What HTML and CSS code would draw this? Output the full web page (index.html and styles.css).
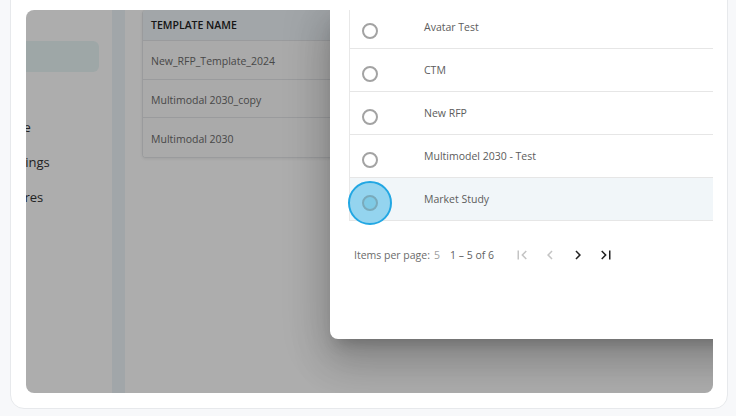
FILE: index.html
```html
<!DOCTYPE html>
<html lang="en">
  <head>
    <meta charset="UTF-8" />
    <meta name="viewport" content="width=device-width, initial-scale=1.0" />
    <title>Templates</title>
    <link rel="stylesheet" href="styles.css">
  </head>
  <body>
    <div class="card">
      <div class="frame">
        <aside class="sidebar">
          <nav class="nav">
            <a class="nav-item active">Home</a>
            <a class="nav-item">Users</a>
            <a class="nav-item">Template</a>
            <a class="nav-item">App Settings</a>
            <a class="nav-item">Procedures</a>
          </nav>
        </aside>
        <div class="strip"></div>
        <main class="main">
          <div class="tpl-table">
            <div class="tpl-head">TEMPLATE NAME</div>
            <div class="tpl-row">New_RFP_Template_2024</div>
            <div class="tpl-row">Multimodal 2030_copy</div>
            <div class="tpl-row">Multimodal 2030</div>
          </div>
        </main>

        <div class="backdrop"></div>

        <div class="dialog">
          <div class="pick-table">
            <div class="pick-row">
              <div class="radio-cell"><span class="radio"></span></div>
              <div class="name-cell">Avatar Test</div>
            </div>
            <div class="pick-row">
              <div class="radio-cell"><span class="radio"></span></div>
              <div class="name-cell">CTM</div>
            </div>
            <div class="pick-row">
              <div class="radio-cell"><span class="radio"></span></div>
              <div class="name-cell">New RFP</div>
            </div>
            <div class="pick-row">
              <div class="radio-cell"><span class="radio"></span></div>
              <div class="name-cell">Multimodel 2030 - Test</div>
            </div>
            <div class="pick-row selected">
              <div class="radio-cell"><span class="ripple"></span><span class="radio"></span></div>
              <div class="name-cell">Market Study</div>
            </div>
          </div>

          <div class="paginator">
            <span class="per-page">Items per page:</span>
            <span class="page-size">5</span>
            <span class="range">1 – 5 of 6</span>
            <div class="page-btns">
              <button class="page-btn off">
                <svg viewBox="0 0 24 24"><path d="M18.41 16.59L13.82 12l4.59-4.59L17 6l-6 6 6 6zM6 6h2v12H6z"/></svg>
              </button>
              <button class="page-btn off">
                <svg viewBox="0 0 24 24"><path d="M15.41 7.41L14 6l-6 6 6 6 1.41-1.41L10.83 12z"/></svg>
              </button>
              <button class="page-btn">
                <svg viewBox="0 0 24 24"><path d="M10 6L8.59 7.41 13.17 12l-4.58 4.59L10 18l6-6z"/></svg>
              </button>
              <button class="page-btn">
                <svg viewBox="0 0 24 24"><path d="M5.59 7.41L10.18 12l-4.59 4.59L7 18l6-6-6-6zM16 6h2v12h-2z"/></svg>
              </button>
            </div>
          </div>
        </div>
      </div>
    </div>
  </body>
</html>
```

FILE: styles.css
```css
* {
  margin: 0;
  padding: 0;
  box-sizing: border-box;
}

body {
  background: #f7f8fa;
  font-family: "Open Sans", "Liberation Sans", sans-serif;
  height: 100vh;
  overflow: hidden;
}

.card {
  margin: -20px 8px 0 10px;
  height: 429px;
  background: #fff;
  border: 1px solid #e7e9ec;
  border-radius: 14px;
  padding: 29px 14px 15px 15px;
}

.frame {
  position: relative;
  height: 383px;
  display: flex;
  overflow: hidden;
  border-radius: 8px 0 8px 8px;
  background: #fff;
}

/* sidebar, scrolled partly out of view */
.sidebar {
  width: 86px;
  overflow: hidden;
  background: #fff;
}

.nav {
  margin-left: -64px;
  padding-top: 31px;
  display: flex;
  flex-direction: column;
  gap: 4px;
  width: 170px;
}

.nav-item {
  height: 31px;
  display: flex;
  align-items: center;
  padding-left: 12px;
  font-size: 13px;
  color: #333;
  white-space: nowrap;
}

.nav-item.active {
  width: 137px;
  background: #e9f7f7;
  border-radius: 0 6px 6px 0;
}

.strip {
  width: 13px;
  background: #eef5fa;
}

.main {
  flex: 1;
  padding-left: 17px;
}

.tpl-table {
  width: 320px;
  border: 1px solid #e3e5e7;
  border-top: none;
  border-radius: 4px;
  overflow: hidden;
  box-shadow: 0 1px 3px rgba(0, 0, 0, 0.08);
}

.tpl-head {
  height: 31px;
  display: flex;
  align-items: center;
  padding-left: 8px;
  background: #eff5f9;
  border-bottom: 1px solid #e3e5e7;
  font-size: 10.5px;
  font-weight: 600;
  color: #222;
}

.tpl-row {
  height: 38.7px;
  display: flex;
  align-items: center;
  padding: 2px 0 0 8px;
  background: #fbfbfb;
  border-bottom: 1px solid #e3e5e7;
  font-size: 10.5px;
  color: #6a6a6a;
}

.tpl-row:last-child {
  border-bottom: none;
}

.backdrop {
  position: absolute;
  inset: 0;
  background: rgba(0, 0, 0, 0.32);
}

/* picker dialog */
.dialog {
  position: absolute;
  left: 304px;
  top: -4px;
  width: 440px;
  height: 333px;
  background: #fff;
  border-radius: 0 0 8px 8px;
  padding-left: 19px;
  box-shadow: 0 11px 15px -7px rgba(0, 0, 0, 0.2),
              0 24px 38px 3px rgba(0, 0, 0, 0.14),
              0 9px 46px 8px rgba(0, 0, 0, 0.12);
}

.pick-table {
  border-left: 1px solid #e8e8e8;
}

.pick-row {
  height: 43px;
  display: flex;
  align-items: center;
  border-bottom: 1px solid #e6e6e6;
}

.pick-row.selected {
  background: #f1f6f9;
}

.radio-cell {
  position: relative;
  width: 74px;
  padding: 8px 0 0 12px;
  display: flex;
  align-items: center;
}

.radio {
  position: relative;
  width: 16px;
  height: 16px;
  border: 2px solid #a3a3a3;
  border-radius: 50%;
}

.selected .radio {
  background: #7fcae5;
  border-color: #7aaabb;
}

.ripple {
  position: absolute;
  left: -2px;
  top: -6px;
  width: 44px;
  height: 44px;
  border-radius: 50%;
  background: #94d4ef;
  border: 2px solid #22a7e3;
}

.name-cell {
  font-size: 10.5px;
  color: #5c5c5c;
}

.paginator {
  height: 68px;
  display: flex;
  align-items: center;
  padding: 0 0 0 5px;
  font-size: 10.5px;
  color: #6b6b6b;
}

.page-size {
  margin-left: 4px;
  color: #a0a0a0;
}

.range {
  margin-left: 10px;
  color: #5f5f5f;
}

.page-btns {
  display: flex;
  margin-left: 14px;
}

.page-btn {
  width: 28px;
  height: 28px;
  display: flex;
  align-items: center;
  justify-content: center;
  background: none;
  border: none;
}

.page-btn svg {
  width: 18px;
  height: 18px;
  fill: #222;
}

.page-btn.off svg {
  fill: #c4c4c4;
}
```
